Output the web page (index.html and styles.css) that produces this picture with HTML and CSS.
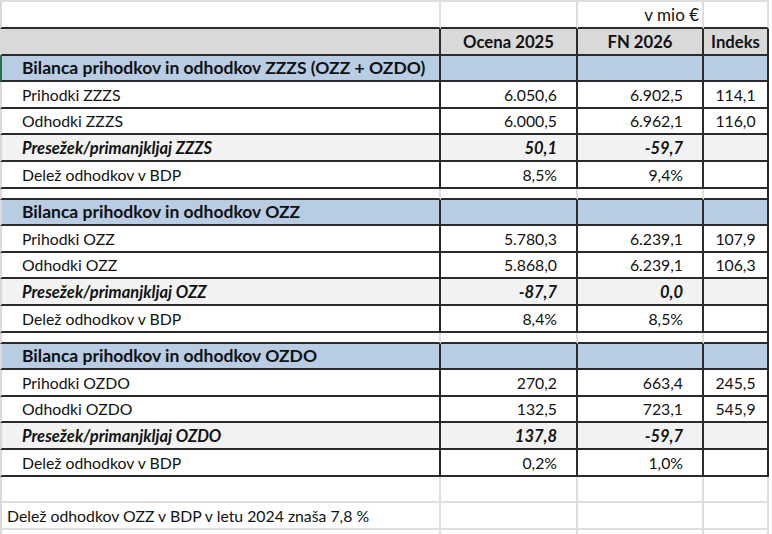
FILE: index.html
```html
<!DOCTYPE html>
<html lang="sl">
<head>
<meta charset="utf-8">
<title>Bilanca ZZZS</title>
<link rel="stylesheet" href="styles.css">
</head>
<body>
<table class="sheet">
  <colgroup>
    <col class="col-a">
    <col class="col-b">
    <col class="col-c">
    <col class="col-d">
  </colgroup>
  <tbody>
    <tr class="r-top">
      <td></td><td></td><td class="unit">v mio €</td><td></td>
    </tr>
    <tr class="r-head">
      <td></td><td>Ocena 2025</td><td>FN 2026</td><td>Indeks</td>
    </tr>
    <tr class="r-sec active">
      <td>Bilanca prihodkov in odhodkov ZZZS (OZZ + OZDO)</td><td></td><td></td><td></td>
    </tr>
    <tr class="r-row">
      <td>Prihodki ZZZS</td><td>6.050,6</td><td>6.902,5</td><td>114,1</td>
    </tr>
    <tr class="r-row">
      <td>Odhodki ZZZS</td><td>6.000,5</td><td>6.962,1</td><td>116,0</td>
    </tr>
    <tr class="r-row r-sum">
      <td>Presežek/primanjkljaj ZZZS</td><td>50,1</td><td>-59,7</td><td></td>
    </tr>
    <tr class="r-row">
      <td>Delež odhodkov v BDP</td><td>8,5%</td><td>9,4%</td><td></td>
    </tr>
    <tr class="r-gap"><td></td><td></td><td></td><td></td></tr>

    <tr class="r-sec">
      <td>Bilanca prihodkov in odhodkov OZZ</td><td></td><td></td><td></td>
    </tr>
    <tr class="r-row">
      <td>Prihodki OZZ</td><td>5.780,3</td><td>6.239,1</td><td>107,9</td>
    </tr>
    <tr class="r-row">
      <td>Odhodki OZZ</td><td>5.868,0</td><td>6.239,1</td><td>106,3</td>
    </tr>
    <tr class="r-row r-sum">
      <td>Presežek/primanjkljaj OZZ</td><td>-87,7</td><td>0,0</td><td></td>
    </tr>
    <tr class="r-row">
      <td>Delež odhodkov v BDP</td><td>8,4%</td><td>8,5%</td><td></td>
    </tr>
    <tr class="r-gap"><td></td><td></td><td></td><td></td></tr>

    <tr class="r-sec">
      <td>Bilanca prihodkov in odhodkov OZDO</td><td></td><td></td><td></td>
    </tr>
    <tr class="r-row">
      <td>Prihodki OZDO</td><td>270,2</td><td>663,4</td><td>245,5</td>
    </tr>
    <tr class="r-row">
      <td>Odhodki OZDO</td><td>132,5</td><td>723,1</td><td>545,9</td>
    </tr>
    <tr class="r-row r-sum">
      <td>Presežek/primanjkljaj OZDO</td><td>137,8</td><td>-59,7</td><td></td>
    </tr>
    <tr class="r-row">
      <td>Delež odhodkov v BDP</td><td>0,2%</td><td>1,0%</td><td></td>
    </tr>

    <tr class="r-plain"><td></td><td></td><td></td><td></td></tr>
    <tr class="r-plain r-note">
      <td>Delež odhodkov OZZ v BDP v letu 2024 znaša 7,8 %</td><td></td><td></td><td></td>
    </tr>
    <tr class="r-plain"><td></td><td></td><td></td><td></td></tr>
  </tbody>
</table>
</body>
</html>
```

FILE: styles.css
```css
html, body {
  margin: 0;
  padding: 0;
  background: #ffffff;
}

body {
  font-family: Lato, "Open Sans", "Liberation Sans", sans-serif;
  font-size: 15.8px;
  color: #111111;
  overflow: hidden;
}

.sheet {
  border-collapse: separate;
  border-spacing: 0;
  table-layout: fixed;
  width: 769px;
}

.col-a { width: 441px; }
.col-b { width: 137px; }
.col-c { width: 126px; }
.col-d { width: 65px; }

.sheet td {
  box-sizing: border-box;
  padding: 0 19px 3px 0;
  vertical-align: bottom;
  white-space: nowrap;
  overflow: hidden;
  text-align: right;
  line-height: 18px;
  border-right: 2px solid #2b2b2b;
  border-bottom: 2px solid #2b2b2b;
}

.sheet td:first-child {
  text-align: left;
  padding: 0 0 3px 20px;
  border-left: 2px solid #d9d9d9;
}

.sheet td:last-child {
  text-align: center;
  padding: 0 0 3px 0;
}

/* top line: unit caption */
.r-top { height: 29px; }
.r-top td {
  border-top: 2px solid #dedede;
  border-right-color: #dedede;
}
.r-top .unit {
  padding-right: 3px;
  font-size: 17px;
}

/* column headings */
.r-head { height: 26.6px; }
.r-head td {
  background: #d9d9d9;
  font-weight: 700;
  font-size: 16.7px;
  text-align: center;
  padding: 0 0 3px 0;
}
.r-head td:first-child { padding: 0; }

/* section title */
.r-sec { height: 26.6px; }
.r-sec td {
  background: #b8cce4;
  font-weight: 700;
  font-size: 17.5px;
}
.r-sec.active td:first-child { border-left-color: #217346; }

/* data rows */
.r-row { height: 26.6px; }

.r-sum td {
  background: #f2f2f2;
  font-weight: 700;
  font-style: italic;
  font-size: 16.5px;
}

/* thin separator rows */
.r-gap { height: 11px; }
.r-gap td { border-right-color: #dedede; }
.r-gap td:last-child { border-right-color: #2b2b2b; }

/* sheet area below the table */
.r-plain { height: 26.6px; }
.r-plain td {
  border-right-color: #dedede;
  border-bottom-color: #dedede;
}
.r-note td:first-child {
  padding-left: 5px;
}
```
